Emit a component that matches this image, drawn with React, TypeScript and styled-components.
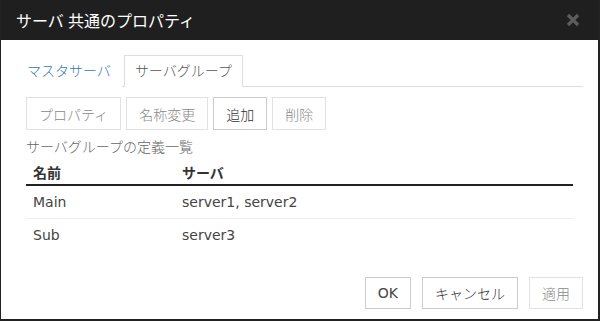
import React, { useState } from 'react'
import styled, { createGlobalStyle } from 'styled-components'

const GlobalStyle = createGlobalStyle`
  html, body {
    margin: 0;
    padding: 0;
    background: #ffffff;
  }
  body {
    font-family: "Noto Sans", "Noto Sans CJK JP", sans-serif;
    font-size: 14px;
    font-weight: 300;
    color: #333333;
  }
  * {
    box-sizing: border-box;
  }
`

const latinFont = `"DejaVu Sans", "Noto Sans CJK JP", sans-serif`

const Dialog = styled.div`
  width: 600px;
  height: 321px;
  display: flex;
  flex-direction: column;
  background: #ffffff;
  border-left: 1px solid #222222;
  border-right: 2px solid #222222;
  border-bottom: 2px solid #222222;
`

const TitleBar = styled.div`
  height: 40px;
  flex: none;
  display: flex;
  align-items: center;
  justify-content: space-between;
  padding: 0 18px 0 15px;
  background: #1f1f1f;
  color: #ffffff;
  font-size: 16px;
  font-weight: 400;
`

const CloseButton = styled.button`
  border: none;
  background: none;
  padding: 0;
  width: 14px;
  height: 14px;
  display: flex;
  cursor: pointer;
`

const Body = styled.div`
  flex: 1;
  padding: 15px 15px 0 15px;
`

const TabList = styled.div`
  display: flex;
  border-bottom: 1px solid #dddddd;
  height: 32px;
`

const Tab = styled.button<{ $active?: boolean }>`
  font: inherit;
  font-size: 14px;
  height: 32px;
  padding: 0 10px;
  margin-right: 2px;
  margin-bottom: -1px;
  border: 1px solid ${(p) => (p.$active ? '#dddddd' : 'transparent')};
  border-bottom-color: ${(p) => (p.$active ? '#ffffff' : 'transparent')};
  background: #ffffff;
  color: ${(p) => (p.$active ? '#555555' : '#3779b5')};
  cursor: pointer;
  line-height: 30px;
`

const Panel = styled.div`
  padding: 10px 10px 0 10px;
`

const ButtonRow = styled.div`
  display: flex;
  gap: 5px;
`

const Button = styled.button<{ $enabled?: boolean }>`
  font: inherit;
  font-size: 14px;
  height: 33px;
  padding: 0 12px;
  background: #ffffff;
  border: 1px solid ${(p) => (p.$enabled ? '#cccccc' : '#e2e2e2')};
  color: ${(p) => (p.$enabled ? '#333333' : '#888888')};
  cursor: ${(p) => (p.$enabled ? 'pointer' : 'default')};
`

const Caption = styled.div`
  margin-top: 7px;
  height: 20px;
  line-height: 20px;
  color: #666666;
`

const Table = styled.table`
  width: 100%;
  border-collapse: collapse;
  margin-top: 2px;
`

const HeadCell = styled.th<{ $width?: number }>`
  text-align: left;
  font-weight: bold;
  padding: 0 7px;
  height: 26px;
  border-bottom: 2px solid #222222;
  width: ${(p) => (p.$width ? `${p.$width}px` : 'auto')};
`

const Cell = styled.td<{ $last?: boolean }>`
  font-family: ${latinFont};
  font-weight: 400;
  font-size: 14px;
  color: #444444;
  padding: 0 7px;
  height: 33px;
  vertical-align: middle;
  border-bottom: ${(p) => (p.$last ? 'none' : '1px solid #eeeeee')};
`

const Footer = styled.div`
  display: flex;
  justify-content: flex-end;
  gap: 11px;
  padding: 0 15px 10px 0;
`

const FooterButton = styled(Button)<{ $latin?: boolean }>`
  height: 32px;
  ${(p) => (p.$latin ? `font-family: ${latinFont}; font-weight: 400; color: #444444;` : '')}
`

const groups = [
  { name: 'Main', servers: 'server1, server2' },
  { name: 'Sub', servers: 'server3' },
]

const App = () => {
  const [tab, setTab] = useState('group')

  return (
    <>
      <GlobalStyle />
      <Dialog>
        <TitleBar>
          <span>サーバ 共通のプロパティ</span>
          <CloseButton aria-label="close">
            <svg width="14" height="14" viewBox="0 0 14 14">
              <path d="M2 2 L12 12 M12 2 L2 12" stroke="#5c5c5c" strokeWidth="3.2" strokeLinecap="butt" />
            </svg>
          </CloseButton>
        </TitleBar>
        <Body>
          <TabList>
            <Tab $active={tab === 'master'} onClick={() => setTab('master')}>
              マスタサーバ
            </Tab>
            <Tab $active={tab === 'group'} onClick={() => setTab('group')}>
              サーバグループ
            </Tab>
          </TabList>
          <Panel>
            <ButtonRow>
              <Button>プロパティ</Button>
              <Button>名称変更</Button>
              <Button $enabled>追加</Button>
              <Button>削除</Button>
            </ButtonRow>
            <Caption>サーバグループの定義一覧</Caption>
            <Table>
              <thead>
                <tr>
                  <HeadCell $width={149}>名前</HeadCell>
                  <HeadCell>サーバ</HeadCell>
                </tr>
              </thead>
              <tbody>
                {groups.map((g, i) => (
                  <tr key={g.name}>
                    <Cell $last={i === groups.length - 1}>{g.name}</Cell>
                    <Cell $last={i === groups.length - 1}>{g.servers}</Cell>
                  </tr>
                ))}
              </tbody>
            </Table>
          </Panel>
        </Body>
        <Footer>
          <FooterButton $enabled $latin>OK</FooterButton>
          <FooterButton $enabled>キャンセル</FooterButton>
          <FooterButton>適用</FooterButton>
        </Footer>
      </Dialog>
    </>
  )
}

export default App
